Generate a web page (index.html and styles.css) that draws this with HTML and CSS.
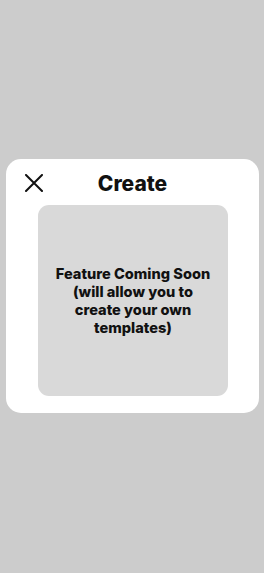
FILE: index.html
```html
<!DOCTYPE html>
<html>
<head lang="en">
    <meta charset="UTF-8">
    <title>Create</title>
    <link rel="stylesheet" href="styles.css">
</head>
<body>
<div class="page">
    <div class="card">
        <div class="card-head">
            <button class="close" aria-label="Close">
                <svg width="20" height="18" viewBox="0 0 20 18">
                    <path d="M2 1 L18 17 M18 1 L2 17" stroke="#111" stroke-width="2" stroke-linecap="round" fill="none"/>
                </svg>
            </button>
            <h1 class="title">Create</h1>
            <span></span>
        </div>
        <div class="soon">
            <p>Feature Coming Soon (will allow you to create your own templates)</p>
        </div>
    </div>
</div>
</body>
</html>
```

FILE: styles.css
```css
*{
    margin:0;
    padding:0;
    box-sizing: border-box;
}
html,body{
    height: 100%;
}
body{
    background: #cccccc;
    font-family: Inter, "Noto Sans", sans-serif;
    color: #111;
}
.page{
    height: 100%;
    padding-top: 159px;
}
.card{
    width: 253px;
    margin-left: 6px;
    background: #fff;
    border-radius: 15px;
    padding: 0 31px 17px 32px;
}
.card-head{
    height: 46px;
    display: grid;
    grid-template-columns: 1fr auto 1fr;
    align-items: center;
    margin: 0 -31px 0 -32px;
    padding: 2px 18px 0 18px;
}
.close{
    border: 0;
    background: none;
    width: 20px;
    height: 18px;
    display: block;
    cursor: pointer;
}
.close svg{
    display: block;
}
.title{
    font-size: 21px;
    font-weight: 800;
}
.soon{
    height: 191px;
    background: #d9d9d9;
    border-radius: 11px;
    display: flex;
    align-items: center;
    justify-content: center;
    padding: 0 15px;
}
.soon p{
    font-size: 14.6px;
    font-weight: 800;
    line-height: 18px;
    text-align: center;
}
```
